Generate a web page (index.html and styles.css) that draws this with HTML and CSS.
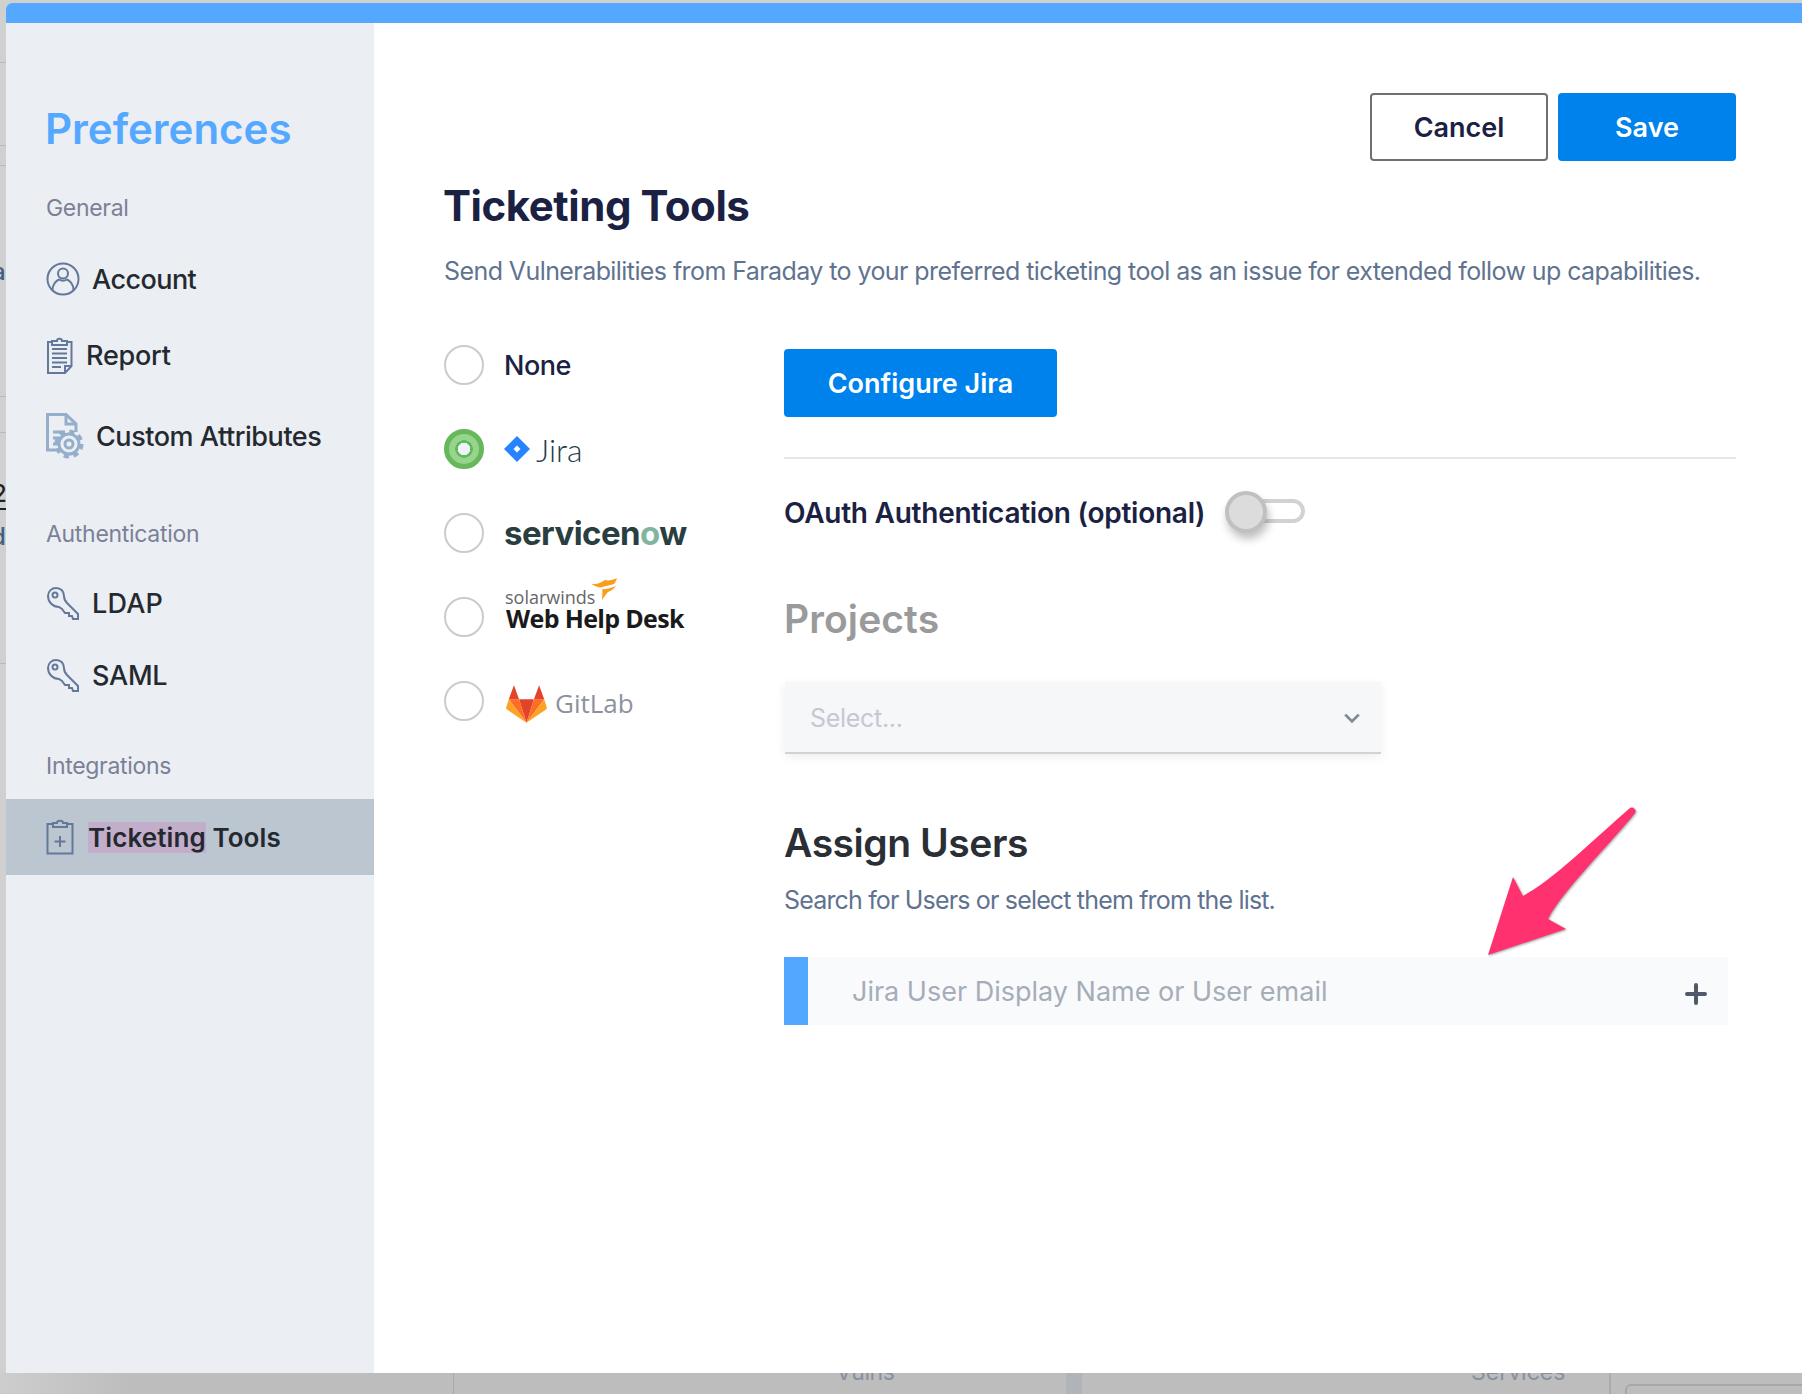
FILE: index.html
```html
<!DOCTYPE html>
<html lang="en">
<head>
<meta charset="utf-8">
<title>Preferences - Ticketing Tools</title>
<link rel="stylesheet" href="styles.css">
</head>
<body>
<div class="page">
  <div class="backdrop" aria-hidden="true">
    <i class="bd-line bd-l1"></i><i class="bd-line bd-l2"></i><i class="bd-line bd-l3"></i><i class="bd-line bd-l4"></i><i class="bd-line bd-l5"></i><i class="bd-line bd-l6"></i>
    <span class="bd-frag bd-a">a</span>
    <span class="bd-frag bd-2">2</span>
    <span class="bd-frag bd-d">d</span>
    <i class="bd-v bd-v1"></i><i class="bd-v bd-v2"></i><i class="bd-v bd-v3"></i>
    <i class="bd-card"></i>
    <span class="bd-tab bd-vulns">Vulns</span>
    <span class="bd-tab bd-services">Services</span>
  </div>

  <div class="modal">
    <div class="modal-bar"></div>
    <div class="modal-body">
      <aside class="sidebar">
        <h1 class="side-title">Preferences</h1>
        <div class="side-label side-label--general">General</div>
        <div class="side-row">
          <svg class="ic ic-account" viewBox="0 0 34 34"><circle cx="17" cy="17" r="15.500"/><circle cx="17" cy="11.500" r="5"/><path d="M6.500 28c0-6 4-9.500 6.500-10.500 2.500 1.600 5.500 1.600 8 0 2.500 1 6.500 4.500 6.500 10.500"/></svg>
          <span class="row-text row-text--account">Account</span>
        </div>
        <div class="side-row">
          <svg class="ic ic-report" viewBox="0 0 27 37"><path d="M6 5H2v31h17l6.500-7V5h-4.500"/><path d="M6 8V4h5c0-3 5-3 5 0h5v4z"/><path d="M19 36v-7h6.500M6 12h15M6 16.500h15M6 21h15M6 25.500h15M6 30h9"/></svg>
          <span class="row-text row-text--report">Report</span>
        </div>
        <div class="side-row side-row--custom">
          <svg class="ic ic-custom" viewBox="0 0 38 46"><path d="M17 37H1.500V1.500H20L30 11v8"/><path d="M20 1.500V11h10"/><path d="M7 19h12M7 25h7M7 31h6"/><circle cx="23" cy="31" r="12" class="gear-teeth"/><circle cx="23" cy="31" r="10" class="gear-body"/><circle cx="23" cy="31" r="4"/></svg>
          <span class="row-text row-text--custom">Custom Attributes</span>
        </div>

        <div class="side-label side-label--auth">Authentication</div>
        <div class="side-row side-row--key">
          <svg class="ic ic-key" viewBox="0 0 33 33"><path d="M2 9C2 4 6 1 10 1c5 0 8 3.500 8 8 0 3 1 5 3 7l11 11v5h-5l-1-3h-3v-3h-4l-3-4-3-2C7 20 2 15 2 9z"/><circle cx="9" cy="8" r="2.500"/></svg>
          <span class="row-text row-text--ldap">LDAP</span>
        </div>
        <div class="side-row side-row--key">
          <svg class="ic ic-key" viewBox="0 0 33 33"><path d="M2 9C2 4 6 1 10 1c5 0 8 3.500 8 8 0 3 1 5 3 7l11 11v5h-5l-1-3h-3v-3h-4l-3-4-3-2C7 20 2 15 2 9z"/><circle cx="9" cy="8" r="2.500"/></svg>
          <span class="row-text row-text--saml">SAML</span>
        </div>

        <div class="side-label side-label--integ">Integrations</div>
        <div class="side-row side-row--active">
          <svg class="ic ic-clip" viewBox="0 0 28 36"><path d="M7 5H1.500v29.500h25V5H21"/><path d="M7 8V4h4c0-3 6-3 6 0h4v4z"/><path d="M14 17v11M8.500 22.500h11"/></svg>
          <span class="row-text row-text--active"><mark class="hl">Ticketing</mark> Tools</span>
        </div>
      </aside>

      <main class="main">
        <div class="actions">
          <button class="btn btn--ghost" type="button">Cancel</button>
          <button class="btn btn--primary" type="button">Save</button>
        </div>
        <h2 class="page-title">Ticketing Tools</h2>
        <p class="page-desc">Send Vulnerabilities from Faraday to your preferred ticketing tool as an issue for extended follow up capabilities.</p>

        <div class="columns">
          <div class="tools">
            <div class="tool">
              <span class="radio"></span>
              <span class="tool-none">None</span>
            </div>
            <div class="tool">
              <span class="radio radio--on"></span>
              <span class="logo-jira">
                <svg class="jira-mark" viewBox="0 0 26 26"><path d="M13 0l13 13-13 13L0 13z" fill="#2684ff"/><path d="M13 9.500l3.500 3.500-3.500 3.500L9.500 13z" fill="#fff"/></svg>
                <span class="jira-word">Jira</span>
              </span>
            </div>
            <div class="tool">
              <span class="radio"></span>
              <span class="logo-sn">servicen<span class="sn-o">o</span>w</span>
            </div>
            <div class="tool">
              <span class="radio"></span>
              <span class="logo-swd">
                <span class="swd-top">solarwinds
                  <svg class="swd-flame" viewBox="0 0 26 22"><path d="M0 5.500C5 7 10 5 14 2c3 1 8 0 12-2-1 3-2 5-3 6-3 1-8 2-14 3.500C6 9 2 7 0 5.500z" fill="#f99d1c"/><path d="M11 11.500c5-.5 10-1.500 14-3.500-2 3-5 5-8 6-2 2-4 5-6 8 0-4 1-8 0-10.500z" fill="#f99d1c"/></svg>
                </span>
                <span class="swd-bottom">Web Help Desk</span>
              </span>
            </div>
            <div class="tool">
              <span class="radio"></span>
              <span class="logo-gl">
                <svg class="gl-mark" viewBox="0 0 44 40"><path d="M22 40l8-25H14z" fill="#e24329"/><path d="M22 40L14 15H3z" fill="#fc6d26"/><path d="M3 15L.3 23.500c-.3 1 0 2 .8 2.500L22 40z" fill="#fca326"/><path d="M3 15h11L8.500 0z" fill="#e24329"/><path d="M22 40l8-25h11z" fill="#fc6d26"/><path d="M41 15l2.700 8.500c.3 1 0 2-.8 2.500L22 40z" fill="#fca326"/><path d="M41 15H30L35.500 0z" fill="#e24329"/></svg>
                <span class="gl-word">GitLab</span>
              </span>
            </div>
          </div>

          <div class="config">
            <button class="btn btn--primary btn--configure" type="button">Configure Jira</button>
            <hr class="divider">
            <div class="oauth">
              <span class="oauth-label">OAuth Authentication (optional)</span>
              <span class="toggle"><span class="toggle-track"></span><span class="toggle-knob"></span></span>
            </div>
            <h3 class="projects">Projects</h3>
            <div class="select">
              <span class="select-ph">Select...</span>
              <svg class="chev" viewBox="0 0 16 10"><path d="M2 2l6 6 6-6"/></svg>
            </div>
            <h3 class="assign">Assign Users</h3>
            <p class="assign-desc">Search for Users or select them from the list.</p>
            <div class="user-input">
              <span class="user-accent"></span>
              <span class="user-ph">Jira User Display Name or User email</span>
              <svg class="plus" viewBox="0 0 22 22"><path d="M11 2v18M2 11h18"/></svg>
            </div>
          </div>
        </div>
      </main>
    </div>
    <svg class="arrow" viewBox="0 0 160 160"><path d="M4 150L29 72l10 19C70 74 108 36 146 3c3-2 7 2 5 5-20 26-73 78-87 106l18 10z"/></svg>
  </div>
</div>
</body>
</html>
```

FILE: styles.css
```css
* { box-sizing: border-box; }
html, body { margin: 0; height: 100%; }
body {
  font-family: Inter, "Liberation Sans", sans-serif;
  overflow: hidden;
  background: #bdbdbd;
}
.page {
  position: relative;
  height: 1394px;
  width: 1802px;
  overflow: hidden;
  padding-top: 3px;
  background: linear-gradient(90deg, #cdcdcd 0, #bdbdbd 130px, #bdbdbd 100%);
}

/* dimmed app behind the modal */
.backdrop { position: absolute; inset: 0; }
.backdrop::before {
  content: "";
  position: absolute;
  left: 0; top: 0; right: 0; height: 1373px;
  background: #d0d0d0;
}
.bd-line { position: absolute; left: 0; width: 6px; height: 1px; background: #b9b9b9; }
.bd-l1 { top: 62px; } .bd-l2 { top: 145px; } .bd-l3 { top: 165px; }
.bd-l4 { top: 396px; } .bd-l5 { top: 432px; } .bd-l6 { top: 663px; }
.bd-frag { position: absolute; font-size: 24px; line-height: 28px; font-weight: 500; }
.bd-a { left: -8px; top: 258px; color: #3f5f82; }
.bd-2 { left: -8px; top: 480px; color: #222; border-bottom: 2px solid #222; }
.bd-d { left: -9px; top: 523px; color: #3f5f82; }
.bd-v { position: absolute; top: 1373px; bottom: 0; }
.bd-v1 { left: 453px; width: 1px; background: #a6a9ad; }
.bd-v2 { left: 1066px; width: 16px; background: #b0b3b7; }
.bd-v3 { left: 1609px; width: 2px; background: #a9acb1; }
.bd-card {
  position: absolute;
  left: 1625px; top: 1384px; right: -10px; bottom: -10px;
  border: 2px solid #a4a8ae;
  border-radius: 6px;
}
.bd-tab { position: absolute; top: 1356px; font-size: 23px; line-height: 32px; color: #87919e; }
.bd-vulns { left: 836px; letter-spacing: -0.5px; }
.bd-services { left: 1471px; }

/* modal */
.modal {
  position: relative;
  margin-left: 6px;
  width: 1796px;
  height: 1370px;
  background: #fff;
  border-top-left-radius: 6px;
  overflow: hidden;
  display: flex;
  flex-direction: column;
}
.modal-bar { height: 20px; flex: none; background: #54a8ff; }
.modal-body { flex: 1; display: flex; min-height: 0; }

/* sidebar */
.sidebar { width: 368px; flex: none; background: #ebeef3; padding-top: 79px; }
.side-title {
  margin: 0 0 0 39px;
  height: 54px;
  line-height: 54px;
  font-size: 42px;
  font-weight: 600;
  color: #54a8ff;
}
.side-label {
  margin-left: 40px;
  height: 30px;
  line-height: 30px;
  font-size: 23px;
  font-weight: 400;
  letter-spacing: -0.3px;
  color: #7b8097;
}
.side-label--general { margin-top: 37px; margin-bottom: 18px; }
.side-label--auth { margin-top: 45px; margin-bottom: 18px; }
.side-label--integ { margin-top: 40px; margin-bottom: 18px; }
.side-row {
  height: 76px;
  display: flex;
  align-items: center;
  padding-left: 40px;
  font-size: 27px;
  font-weight: 500;
  color: #24292f;
}
.side-row--custom { margin-top: 5px; }
.side-row--key { height: 72px; }
.side-row--active { background: #bbc6d1; }
.ic {
  flex: none;
  fill: none;
  stroke: #64799a;
  stroke-width: 2;
}
.ic-account { width: 34px; height: 34px; margin-right: 12px; }
.ic-report { width: 27px; height: 37px; margin-right: 13px; }
.ic-custom { width: 38px; height: 46px; margin-right: 12px; stroke: #94aecb; stroke-width: 3; }
.gear-teeth { stroke-width: 5; stroke-dasharray: 5 4.420; }
.gear-body { fill: #ebeef3; }
.ic-key { width: 33px; height: 33px; margin-right: 13px; }
.ic-clip { width: 28px; height: 36px; margin-right: 14px; }
.hl { background: #c2aecb; color: inherit; padding: 0; }
.row-text--account { letter-spacing: -0.55px; }
.row-text--report { letter-spacing: -0.25px; }
.row-text--custom { letter-spacing: -0.45px; }
.row-text--ldap { letter-spacing: 0.2px; }
.row-text--saml { letter-spacing: -0.25px; }
.row-text--active { font-weight: 600; font-size: 26px; letter-spacing: 0.1px; }

/* main */
.main { flex: 1; min-width: 0; padding: 70px 66px 0 70px; }
.actions { display: flex; justify-content: flex-end; gap: 10px; }
.btn {
  height: 68px;
  width: 178px;
  border-radius: 4px;
  border: 0;
  font-family: inherit;
  font-size: 27px;
  font-weight: 600;
  padding: 0;
}
.btn--ghost { background: #fff; border: 2px solid #707070; color: #1b2142; }
.btn--primary { background: #0082ed; color: #fff; }
.btn--configure { width: 273px; display: block; }
.page-title {
  margin: 20px 0 0 -1px;
  height: 50px;
  line-height: 50px;
  font-size: 42px;
  font-weight: 700;
  letter-spacing: -0.45px;
  color: #1b2142;
}
.page-desc {
  margin: 22px 0 0;
  height: 36px;
  line-height: 36px;
  font-size: 25px;
  letter-spacing: -0.58px;
  color: #5f7390;
  white-space: nowrap;
}
.columns { display: flex; margin-top: 56px; }
.tools { width: 340px; flex: none; display: flex; flex-direction: column; gap: 44px; }
.tool { height: 40px; display: flex; align-items: center; gap: 20px; }
.radio {
  width: 40px; height: 40px;
  flex: none;
  border-radius: 50%;
  border: 2px solid #cbcbcb;
  background: #fff;
}
.radio--on {
  border: 5px solid #66b85b;
  background: radial-gradient(circle, #edf3fb 0 6px, #66b85b 6.500px 8.500px, #97d48c 9px);
}
.tool-none { font-size: 27px; font-weight: 500; letter-spacing: -0.5px; color: #1b2142; margin-top: 1px; }
.logo-jira { display: flex; align-items: center; gap: 6px; }
.jira-mark { width: 26px; height: 26px; }
.jira-word { font-family: Lato, sans-serif; font-size: 32px; font-weight: 300; color: #253b47; }
.logo-sn {
  font-size: 33px;
  font-weight: 700;
  letter-spacing: -0.55px;
  color: #293e40;
  line-height: 40px;
}
.sn-o { color: #81b5a1; }
.logo-swd { display: flex; flex-direction: column; margin-left: 2px; margin-top: -17px; }
.swd-top {
  position: relative;
  margin-left: -1px;
  font-family: "Open Sans", sans-serif;
  font-size: 18px;
  line-height: 19px;
  color: #666;
}
.swd-flame { position: absolute; left: 86px; top: -10px; width: 26px; height: 22px; }
.swd-bottom {
  font-family: "Open Sans", sans-serif;
  font-size: 25px;
  line-height: 23px;
  font-weight: 700;
  letter-spacing: -0.65px;
  color: #1a1a1a;
  white-space: nowrap;
}
.logo-gl { display: flex; align-items: center; gap: 8px; margin-left: 2px; }
.gl-mark { width: 41px; height: 40px; margin-top: 6px; }
.gl-word { font-family: "Open Sans", sans-serif; font-size: 26px; color: #8c929d; margin-top: 4px; }

.config { flex: 1; min-width: 0; padding-top: 4px; }
.divider { margin: 40px 0 0; border: 0; height: 2px; background: #e6e6e6; }
.oauth { margin-top: 32px; height: 42px; display: flex; align-items: center; gap: 20px; }
.oauth-label { font-size: 28px; font-weight: 600; letter-spacing: -0.25px; color: #1b2142; margin-top: 1px; }
.toggle { position: relative; width: 80px; height: 42px; flex: none; }
.toggle-track {
  position: absolute;
  left: 10px; top: 8px;
  width: 70px; height: 24px;
  border: 4px solid #d2d2d2;
  border-radius: 12px;
  background: #fff;
}
.toggle-knob {
  position: absolute;
  left: 0; top: 0;
  width: 42px; height: 42px;
  border-radius: 50%;
  border: 4px solid #c0c0c0;
  background: #dcdcdc;
  box-shadow: 2px 6px 8px rgba(0, 0, 0, .25);
}
.projects {
  margin: 61px 0 0;
  height: 50px;
  line-height: 50px;
  font-size: 39px;
  font-weight: 600;
  letter-spacing: 0.1px;
  color: #9a9a9a;
}
.select {
  margin: 38px 0 0 1px;
  width: 596px;
  height: 72px;
  padding: 2px 20px 0 25px;
  display: flex;
  align-items: center;
  justify-content: space-between;
  background: #f6f7f9;
  border-bottom: 2px solid #d2d2d2;
  box-shadow: 0 3px 10px rgba(0, 0, 0, .07);
}
.select-ph { font-size: 25px; letter-spacing: -0.3px; color: #c5c8d2; }
.chev { width: 18px; height: 12px; fill: none; stroke: #7f8895; stroke-width: 2.500; }
.assign {
  margin: 64px 0 0;
  height: 50px;
  line-height: 50px;
  font-size: 39px;
  font-weight: 600;
  letter-spacing: -0.45px;
  color: #2a2e35;
}
.assign-desc {
  margin: 17px 0 0;
  height: 30px;
  line-height: 30px;
  font-size: 25px;
  letter-spacing: -0.83px;
  color: #5f7390;
}
.user-input {
  margin-top: 42px;
  width: 944px;
  height: 68px;
  display: flex;
  align-items: center;
  background: #f9fafc;
}
.user-accent { width: 24px; height: 100%; background: #52a8ff; flex: none; }
.user-ph { margin-left: 44px; flex: 1; font-size: 27px; color: #a6adb8; }
.plus { width: 22px; height: 22px; margin-right: 21px; margin-top: 6px; stroke: #4f5968; stroke-width: 4; stroke-linecap: round; fill: none; }

.arrow {
  position: absolute;
  left: 1478px; top: 802px;
  width: 160px; height: 160px;
  filter: drop-shadow(1px 1px 1px rgba(0, 0, 0, .35));
}
.arrow path { fill: #ff316f; }
```
